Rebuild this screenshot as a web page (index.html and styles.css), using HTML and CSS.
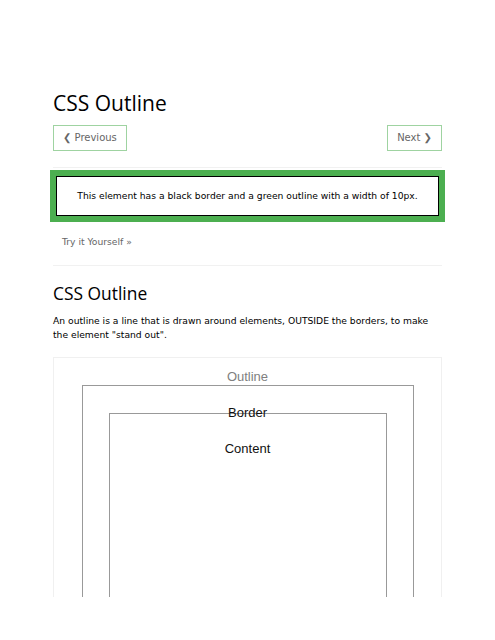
FILE: index.html
```html
<!DOCTYPE html>
<html>
<head>
<meta charset="utf-8">
<link rel="stylesheet" href="styles.css">
</head>
<body>
<div class="page">
  <h1 class="title">CSS Outline</h1>
  <div class="nav">
    <a class="btn">&#10094; Previous</a>
    <a class="btn">Next &#10095;</a>
  </div>
  <hr class="rule rule-top">
  <div class="example">
    <p class="demo">This element has a black border and a green outline with a width of 10px.</p>
    <a class="try">Try it Yourself &raquo;</a>
  </div>
  <hr class="rule">
  <h2 class="subtitle">CSS Outline</h2>
  <p class="text">An outline is a line that is drawn around elements, OUTSIDE the borders, to make the element "stand out".</p>
  <div class="diagram">
    <div class="label label-outline">Outline</div>
    <div class="outline-box">
      <div class="border-box">
        <div class="label label-border">Border</div>
        <div class="label label-content">Content</div>
      </div>
    </div>
  </div>
</div>
</body>
</html>
```
FILE: styles.css
```css
html, body {
  margin: 0;
  padding: 0;
  background: #fff;
}
.page {
  width: 389px;
  margin-left: 53px;
  font-family: "DejaVu Sans", Verdana, sans-serif;
  font-size: 9.2px;
  color: #000;
}
.title {
  font-family: "Open Sans", "Noto Sans", sans-serif;
  font-weight: 400;
  font-size: 21px;
  line-height: 30px;
  margin: 88px 0 0 0;
}
.nav {
  display: flex;
  justify-content: space-between;
  margin-top: 7px;
}
.btn {
  display: block;
  height: 24px;
  line-height: 24px;
  padding: 0 9px;
  border: 1px solid #9fd3a1;
  color: #666;
  font-size: 10px;
  text-decoration: none;
}
.rule {
  border: 0;
  border-top: 1px solid #f1f1f1;
  margin: 16px 0 0 0;
  height: 0;
}
.example {
  display: flex;
  flex-direction: column;
}
.demo {
  margin: 8px 3px 0 3px;
  border: 1px solid #000;
  outline: 6px solid #4caf50;
  padding: 12px 0;
  line-height: 14px;
  text-align: center;
}
.try {
  margin-top: 19px;
  padding-left: 9px;
  line-height: 14px;
  color: #666;
}
.subtitle {
  font-family: "Open Sans", "Noto Sans", sans-serif;
  font-weight: 400;
  font-size: 17.4px;
  line-height: 26px;
  margin: 14px 0 0 0;
}
.text {
  margin: 8px 0 0 0;
  line-height: 14px;
}
.diagram {
  margin-top: 15px;
  height: 240px;
  box-sizing: border-box;
  border: 1px solid #f0f0f0;
  border-bottom: 0;
  overflow: hidden;
  display: flex;
  flex-direction: column;
  align-items: center;
  font-family: "Liberation Sans", Arial, sans-serif;
  font-size: 13px;
}
.label {
  line-height: 16px;
  text-align: center;
}
.label-outline {
  color: #808080;
  margin-top: 11px;
}
.outline-box {
  width: 330px;
  height: 400px;
  border: 1px solid #999;
  padding-top: 27px;
  display: flex;
  justify-content: center;
}
.border-box {
  position: relative;
  width: 276px;
  height: 400px;
  border: 1px solid #999;
  display: flex;
  flex-direction: column;
  align-items: center;
}
.label-border {
  position: absolute;
  top: -9px;
  left: 0;
  right: 0;
  color: #111;
}
.label-content {
  margin-top: 27px;
  color: #111;
}
```
